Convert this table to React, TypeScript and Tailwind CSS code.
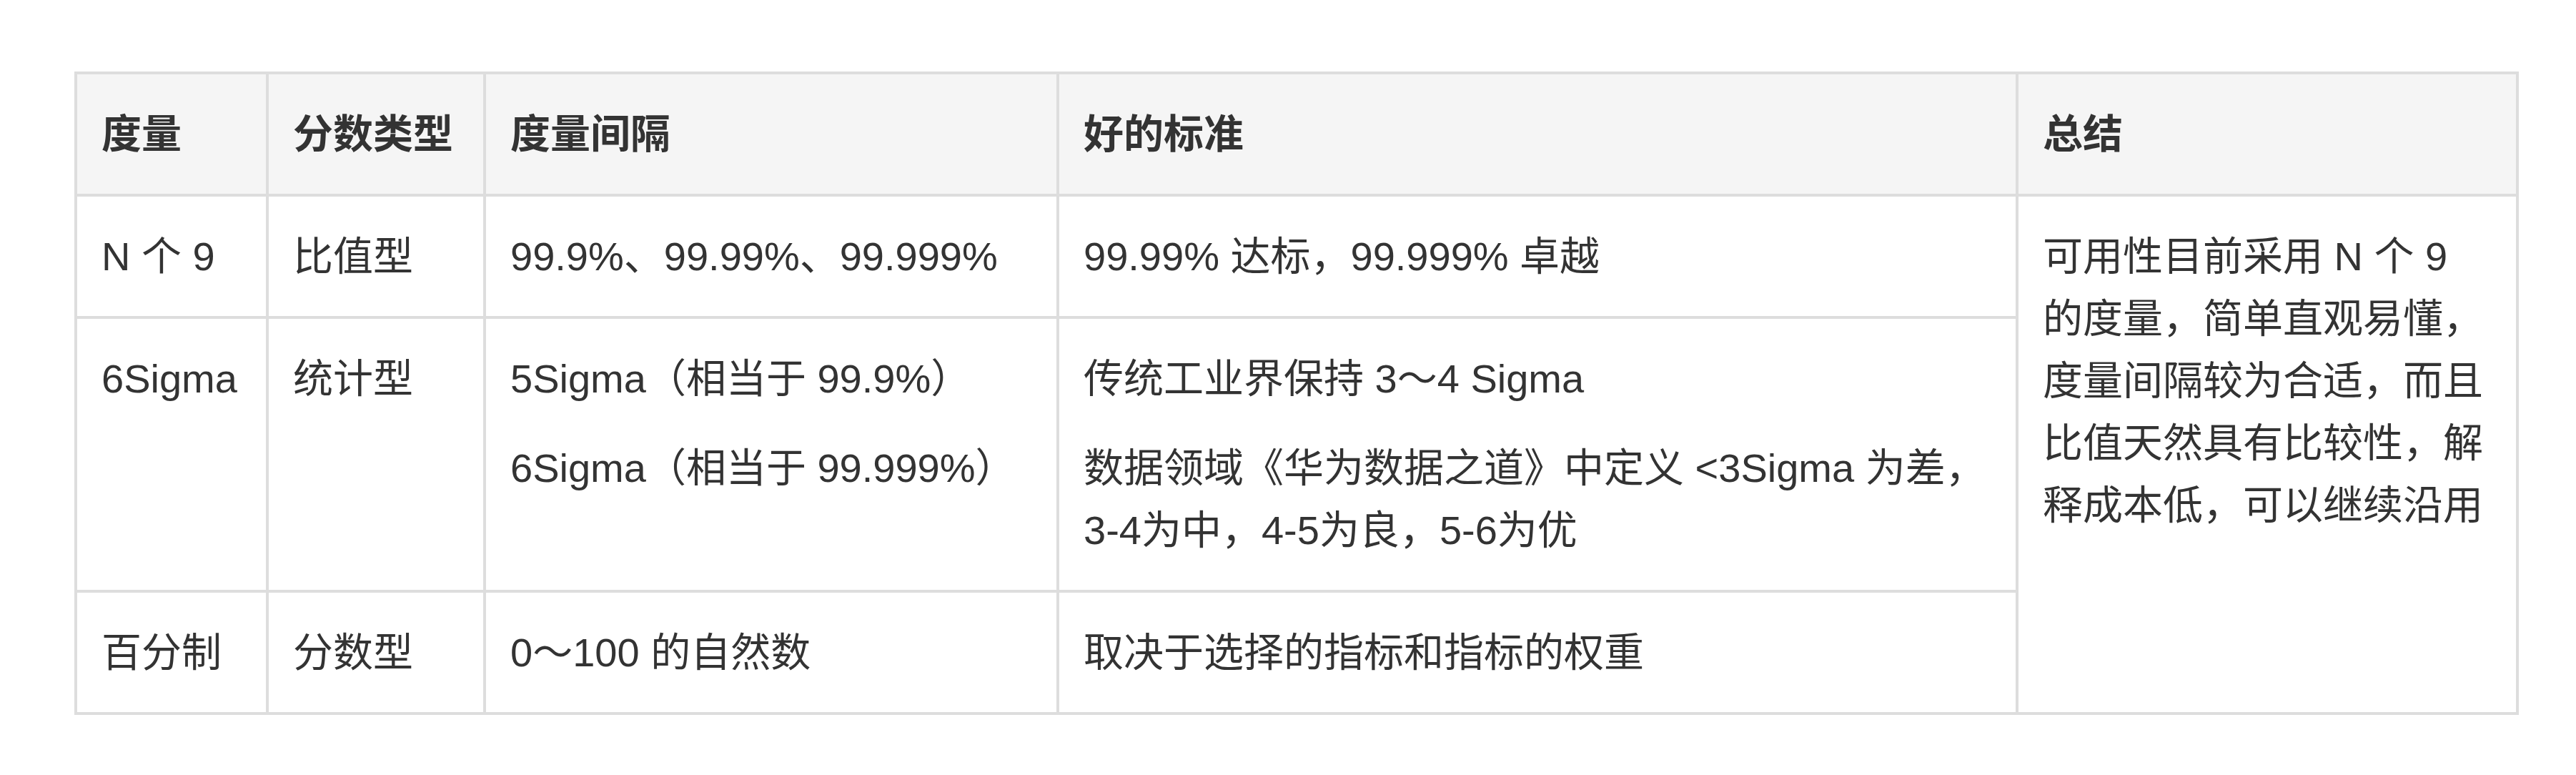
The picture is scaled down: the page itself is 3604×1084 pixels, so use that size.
export default function App() {
  const cell = 'border-[4px] border-[#dddddd] px-[34px] py-[40px] align-top text-left'
  return (
    <div
      className="min-h-screen bg-white pl-[104px] pt-[100px] text-[#333333]"
      style={{ fontFamily: '"Liberation Sans", "Noto Sans CJK SC", sans-serif' }}
    >
      <table className="w-[3416px] table-fixed border-collapse text-[56px] leading-[87px]">
        <colgroup>
          <col className="w-[268px]" />
          <col className="w-[304px]" />
          <col className="w-[802px]" />
          <col className="w-[1342px]" />
          <col className="w-[700px]" />
        </colgroup>
        <thead>
          <tr className="bg-[#f5f5f5]">
            <th className={`${cell} font-bold`}>度量</th>
            <th className={`${cell} font-bold`}>分数类型</th>
            <th className={`${cell} font-bold`}>度量间隔</th>
            <th className={`${cell} font-bold`}>好的标准</th>
            <th className={`${cell} font-bold`}>总结</th>
          </tr>
        </thead>
        <tbody>
          <tr>
            <td className={cell}>N 个 9</td>
            <td className={cell}>比值型</td>
            <td className={cell}>99.9%、99.99%、99.999%</td>
            <td className={cell}>99.99% 达标，99.999% 卓越</td>
            <td className={cell} rowSpan={3}>
              可用性目前采用 N 个 9 的度量，简单直观易懂，度量间隔较为合适，而且比值天然具有比较性，解释成本低，可以继续沿用
            </td>
          </tr>
          <tr>
            <td className={cell}>6Sigma</td>
            <td className={cell}>统计型</td>
            <td className={cell}>
              <p>5Sigma（相当于 99.9%）</p>
              <p className="mt-[38px]">6Sigma（相当于 99.999%）</p>
            </td>
            <td className={cell}>
              <p>传统工业界保持 3～4 Sigma</p>
              <p className="mt-[38px]">数据领域《华为数据之道》中定义 &lt;3Sigma 为差，3-4为中，4-5为良，5-6为优</p>
            </td>
          </tr>
          <tr>
            <td className={cell}>百分制</td>
            <td className={cell}>分数型</td>
            <td className={cell}>0～100 的自然数</td>
            <td className={cell}>取决于选择的指标和指标的权重</td>
          </tr>
        </tbody>
      </table>
    </div>
  )
}
